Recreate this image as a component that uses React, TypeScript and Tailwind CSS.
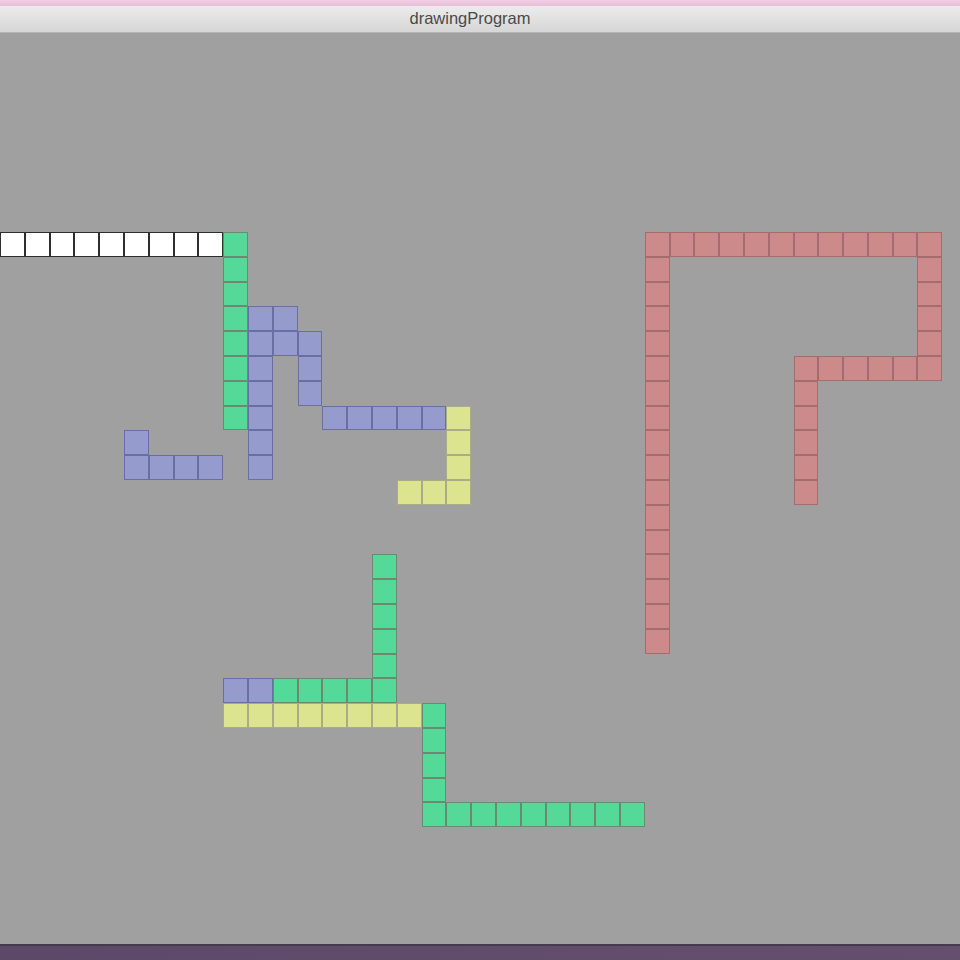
type Cell = [number, number];

const CELL = 24.8;

const palette = {
  white: "bg-white border-[#2e2e2e]",
  green: "bg-[#55d998] border-[#6c8a72]",
  blue: "bg-[#959bcd] border-[#6a6ea4]",
  yellow: "bg-[#dde48f] border-[#a9ac84]",
  red: "bg-[#cc8a8a] border-[#a56c6c]",
};

type Stroke = { color: keyof typeof palette; cells: Cell[] };

// helpers to spell runs of cells: [col, row]
const hRun = (row: number, from: number, to: number): Cell[] =>
  Array.from({ length: to - from + 1 }, (_, i) => [from + i, row] as Cell);
const vRun = (col: number, from: number, to: number): Cell[] =>
  Array.from({ length: to - from + 1 }, (_, i) => [col, from + i] as Cell);

const strokes: Stroke[] = [
  { color: "white", cells: hRun(8, 0, 8) },
  { color: "green", cells: vRun(9, 8, 15) },
  {
    color: "blue",
    cells: [
      ...vRun(10, 11, 17),
      [11, 11],
      [11, 12],
      ...vRun(12, 12, 14),
      ...hRun(15, 13, 17),
      [5, 16],
      ...hRun(17, 5, 8),
    ],
  },
  { color: "yellow", cells: [...vRun(18, 15, 18), [16, 18], [17, 18]] },
  {
    color: "red",
    cells: [
      ...hRun(8, 26, 37),
      ...vRun(26, 9, 24),
      ...vRun(37, 9, 13),
      ...hRun(13, 32, 36),
      ...vRun(32, 14, 18),
    ],
  },
  { color: "green", cells: [...vRun(15, 21, 26), ...hRun(26, 11, 14)] },
  { color: "blue", cells: hRun(26, 9, 10) },
  { color: "yellow", cells: hRun(27, 9, 16) },
  { color: "green", cells: [...vRun(17, 27, 31), ...hRun(31, 18, 25)] },
];

export default function App() {
  return (
    <div className="flex h-[960px] w-[960px] flex-col overflow-hidden bg-[#a0a0a0]">
      <div className="h-[6px] shrink-0 bg-gradient-to-b from-[#f2cde4] to-[#e8bfd9]" />
      <div className="flex h-[27px] shrink-0 items-center justify-center border-b border-[#b4b4b4] bg-gradient-to-b from-[#ececec] to-[#d6d6d6] pb-[1px] pr-[20px]">
        <span className="font-['Liberation_Sans',Arial,sans-serif] text-[16.5px] text-[#4a4a4a]">
          drawingProgram
        </span>
      </div>
      <div className="min-h-0 flex-1 overflow-hidden bg-[#a0a0a0] pt-[0.6px]">
        <div className="grid grid-cols-[repeat(39,24.8px)] grid-rows-[repeat(34,24.8px)]">
          {strokes.flatMap((s, si) =>
            s.cells.map(([c, r]) => (
              <div
                key={`${si}-${c}-${r}`}
                className={`box-border border ${palette[s.color]}`}
                style={{ gridColumn: c + 1, gridRow: r + 1, width: CELL, height: CELL }}
              />
            ))
          )}
        </div>
      </div>
      <div className="h-[16px] shrink-0 border-t-2 border-[#463a4f] bg-gradient-to-r from-[#5c4868] to-[#64506e]" />
    </div>
  );
}
